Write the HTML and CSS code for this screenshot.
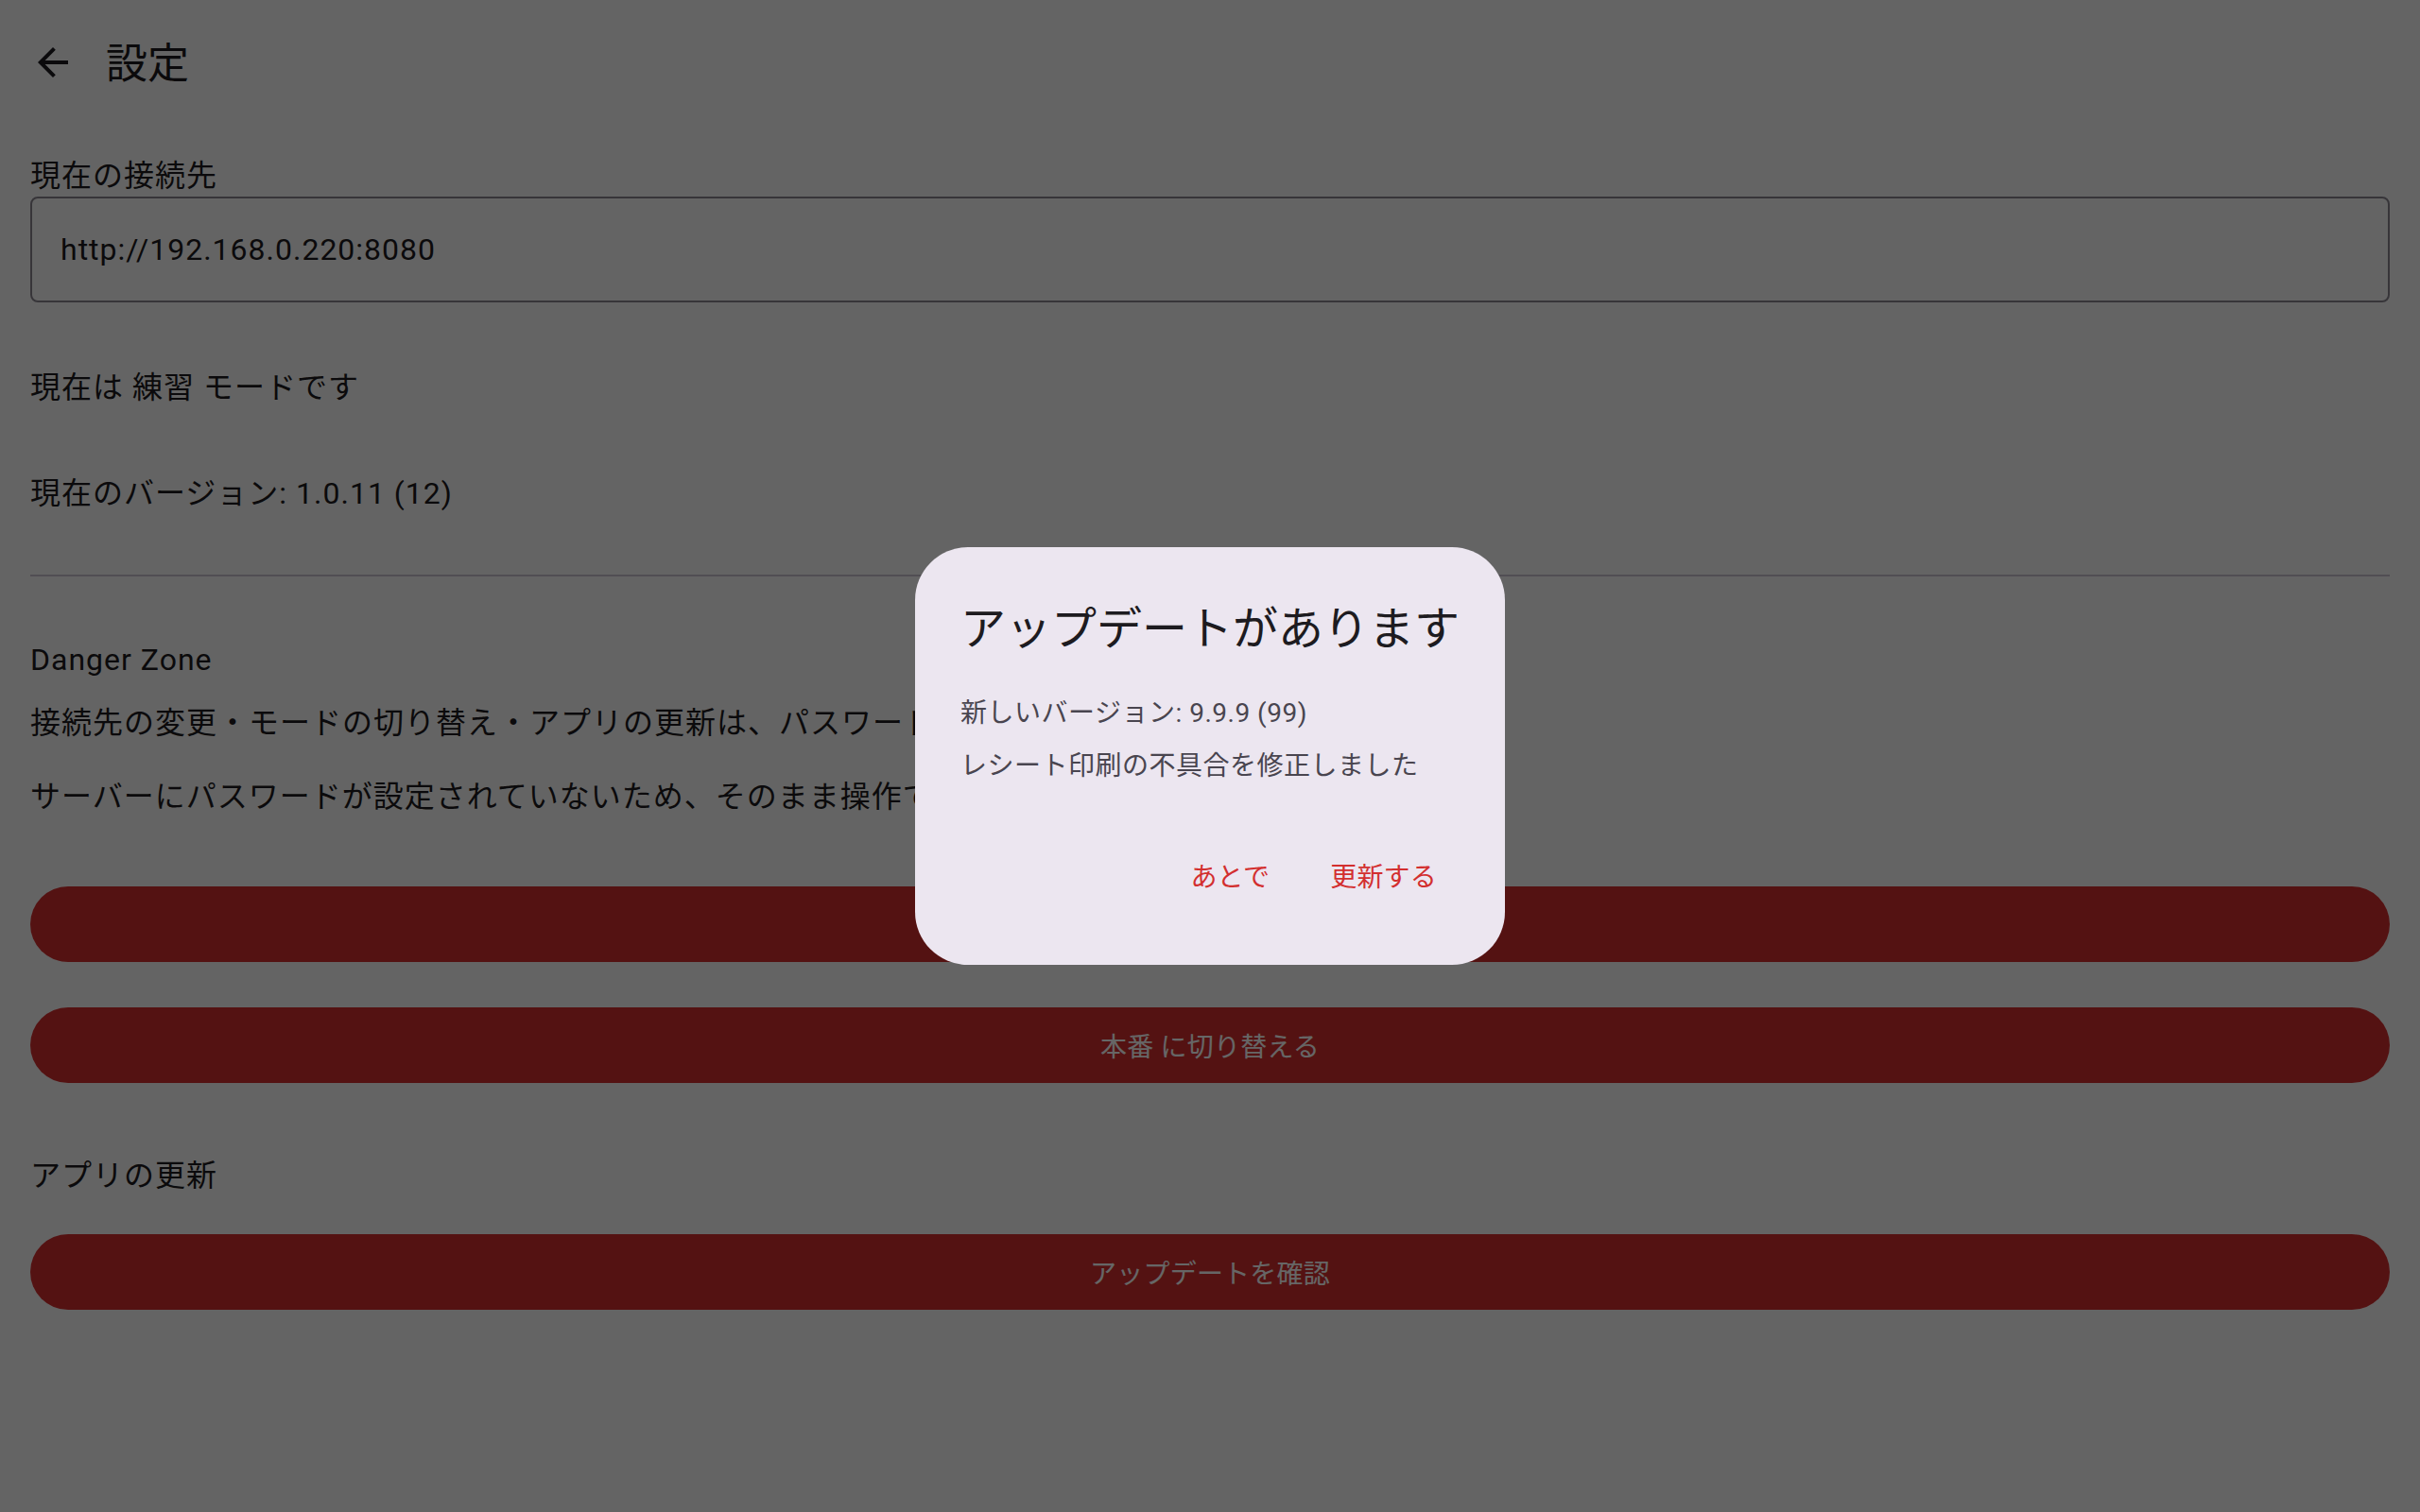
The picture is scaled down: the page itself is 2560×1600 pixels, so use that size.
FILE: index.html
```html
<!DOCTYPE html>
<html lang="ja">
<head>
<meta charset="utf-8">
<title>設定</title>
<link rel="stylesheet" href="styles.css">
</head>
<body>
<div class="app">
  <header class="appbar">
    <button class="back" aria-label="戻る">
      <svg viewBox="0 0 24 24" width="48" height="48"><path d="M20 11H7.83l5.59-5.59L12 4l-8 8 8 8 1.41-1.41L7.83 13H20v-2z"/></svg>
    </button>
    <h1 class="title">設定</h1>
  </header>
  <main class="content">
    <div class="field-label">現在の接続先</div>
    <div class="field">http://192.168.0.220:8080</div>
    <p class="text mode">現在は 練習 モードです</p>
    <p class="text version">現在のバージョン: 1.0.11 (12)</p>
    <hr class="divider">
    <h2 class="text section">Danger Zone</h2>
    <p class="text note1">接続先の変更・モードの切り替え・アプリの更新は、パスワードが必要です。</p>
    <p class="text note2">サーバーにパスワードが設定されていないため、そのまま操作できます。</p>
    <button class="btn btn-first">接続先を変更</button>
    <button class="btn btn-second">本番 に切り替える</button>
    <h2 class="text section update">アプリの更新</h2>
    <button class="btn btn-third">アップデートを確認</button>
  </main>
</div>
<div class="scrim">
  <div class="dialog" role="dialog">
    <h2 class="dialog-title">アップデートがあります</h2>
    <p class="dialog-text first">新しいバージョン: 9.9.9 (99)</p>
    <p class="dialog-text second">レシート印刷の不具合を修正しました</p>
    <div class="actions">
      <button class="action">あとで</button>
      <button class="action">更新する</button>
    </div>
  </div>
</div>
</body>
</html>
```
FILE: styles.css
```css
* { box-sizing: border-box; }
html, body {
  margin: 0;
  padding: 0;
}
body {
  width: 2560px;
  height: 1600px;
  overflow: hidden;
  background: #FAFAFA;
  color: #1D1B20;
  font-family: Roboto, "Noto Sans CJK JP", sans-serif;
}
button { font-family: inherit; }

.app {
  width: 2560px;
  height: 1600px;
  display: flex;
  flex-direction: column;
}

.appbar {
  height: 128px;
  padding-top: 4px;
  display: flex;
  align-items: center;
  flex-shrink: 0;
}
.back {
  width: 112px;
  height: 120px;
  border: 0;
  background: none;
  padding: 0;
  display: flex;
  align-items: center;
  justify-content: center;
}
.back svg { fill: #1D1B20; display: block; }
.title {
  margin: 4px 0 0;
  font-size: 44px;
  font-weight: 400;
  line-height: 64px;
  color: #1D1B20;
}

.content {
  padding: 35px 32px 0;
  display: flex;
  flex-direction: column;
}
.field-label,
.text {
  margin: 0;
  font-size: 32px;
  line-height: 46px;
  font-weight: 400;
  letter-spacing: 1px;
}
.field {
  margin-top: -1px;
  height: 112px;
  border: 2px solid #8A8690;
  border-radius: 8px;
  padding: 0 30px;
  display: flex;
  align-items: center;
  font-size: 32px;
  letter-spacing: 1px;
}
.mode { margin-top: 67px; }
.version { margin-top: 66px; }
.divider {
  margin: 63px 0 0;
  border: 0;
  height: 2px;
  background: #CAC4D0;
}
.section { margin-top: 65px; }
.note1 { margin-top: 21px; }
.note2 { margin-top: 32px; }

.btn {
  height: 80px;
  width: 100%;
  border: 0;
  border-radius: 40px;
  background: #D32F2F;
  color: #FFFFFF;
  font-size: 28px;
  font-weight: 400;
  letter-spacing: 0.2px;
  display: flex;
  align-items: center;
  justify-content: center;
  padding: 0;
}
.btn-first { margin-top: 72px; }
.btn-second { margin-top: 48px; }
.update { margin-top: 75px; }
.btn-third { margin-top: 39px; }

.scrim {
  position: fixed;
  inset: 0;
  background: rgba(0, 0, 0, 0.6);
  display: flex;
  align-items: center;
  justify-content: center;
}
.dialog {
  width: 624px;
  height: 442px;
  background: #ECE6F0;
  border-radius: 56px;
  padding: 52px 48px 55px;
  display: flex;
  flex-direction: column;
}
.dialog-title {
  margin: 0;
  font-size: 48px;
  line-height: 70px;
  font-weight: 400;
  color: #1D1B20;
}
.dialog-text {
  margin: 0;
  font-size: 28px;
  line-height: 40px;
  letter-spacing: 0.5px;
  color: #49454F;
}
.dialog-text.first { margin-top: 34px; }
.dialog-text.second { margin-top: 16px; }
.actions {
  margin-top: auto;
  display: flex;
  justify-content: flex-end;
  gap: 16px;
}
.action {
  height: 80px;
  padding: 0 24px;
  border: 0;
  border-radius: 40px;
  background: none;
  color: #D32F2F;
  font-size: 28px;
  font-weight: 400;
  letter-spacing: 0.2px;
}
```
